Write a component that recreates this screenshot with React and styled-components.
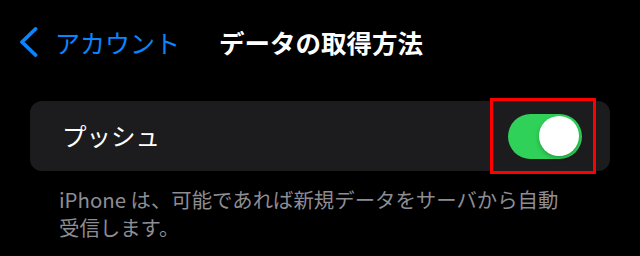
import React from 'react';
import styled, { createGlobalStyle } from 'styled-components';

const GlobalStyle = createGlobalStyle`
  html, body {
    margin: 0;
    padding: 0;
    background: #000;
  }
  body {
    font-family: "Noto Sans CJK JP", "Noto Sans", sans-serif;
    -webkit-font-smoothing: antialiased;
  }
`;

const Screen = styled.div`
  width: 640px;
  height: 256px;
  background: #000;
  overflow: hidden;
  display: flex;
  flex-direction: column;
`;

const NavBar = styled.div`
  display: flex;
  align-items: center;
  height: 30px;
  margin-top: 27px;
  padding-left: 19px;
`;

const BackButton = styled.div`
  display: flex;
  align-items: center;
  gap: 16px;
  color: #0a84ff;
  font-size: 25px;
  line-height: 30px;
`;

const Title = styled.div`
  margin-left: 39px;
  color: #fff;
  font-size: 25.5px;
  font-weight: 700;
  line-height: 30px;
`;

const Card = styled.div`
  margin: 44px 30px 0 30px;
  height: 70px;
  border-radius: 12px;
  background: #1c1c1e;
  display: flex;
  align-items: center;
  justify-content: space-between;
  padding: 0 28px 0 32px;
`;

const RowLabel = styled.div`
  color: #fff;
  font-size: 24.5px;
  line-height: 30px;
`;

const ToggleWrap = styled.div`
  position: relative;
  display: flex;
`;

const Toggle = styled.div`
  width: 74px;
  height: 45px;
  border-radius: 23px;
  background: ${p => (p.on ? '#30d158' : '#39393d')};
  display: flex;
  align-items: center;
  justify-content: ${p => (p.on ? 'flex-end' : 'flex-start')};
  padding: 0 3px;
  box-sizing: border-box;
`;

const Knob = styled.div`
  width: 40px;
  height: 40px;
  border-radius: 50%;
  background: #fff;
  box-shadow: 0 2px 4px rgba(0, 0, 0, 0.25);
`;

const Highlight = styled.div`
  position: absolute;
  left: -18px;
  top: -16px;
  width: 106px;
  height: 76px;
  box-sizing: border-box;
  border: 3px solid #ff0000;
`;

const Footer = styled.div`
  margin-top: 14px;
  padding-left: 59px;
  width: 540px;
  color: #8d8d93;
  font-size: 20.4px;
  line-height: 28px;
`;

const Chevron = () => (
  <svg width="20" height="30" viewBox="0 0 20 30">
    <path
      d="M16.5 2 L3 15 L16.5 28"
      fill="none"
      stroke="#0a84ff"
      strokeWidth="3.8"
      strokeLinecap="round"
      strokeLinejoin="round"
    />
  </svg>
);

export default function App() {
  return (
    <Screen>
      <GlobalStyle />
      <NavBar>
        <BackButton>
          <Chevron />
          <span>アカウント</span>
        </BackButton>
        <Title>データの取得方法</Title>
      </NavBar>
      <Card>
        <RowLabel>プッシュ</RowLabel>
        <ToggleWrap>
          <Toggle on>
            <Knob />
          </Toggle>
          <Highlight />
        </ToggleWrap>
      </Card>
      <Footer>
        iPhone は、可能であれば新規データをサーバから自動
        <br />
        受信します。
      </Footer>
    </Screen>
  );
}
